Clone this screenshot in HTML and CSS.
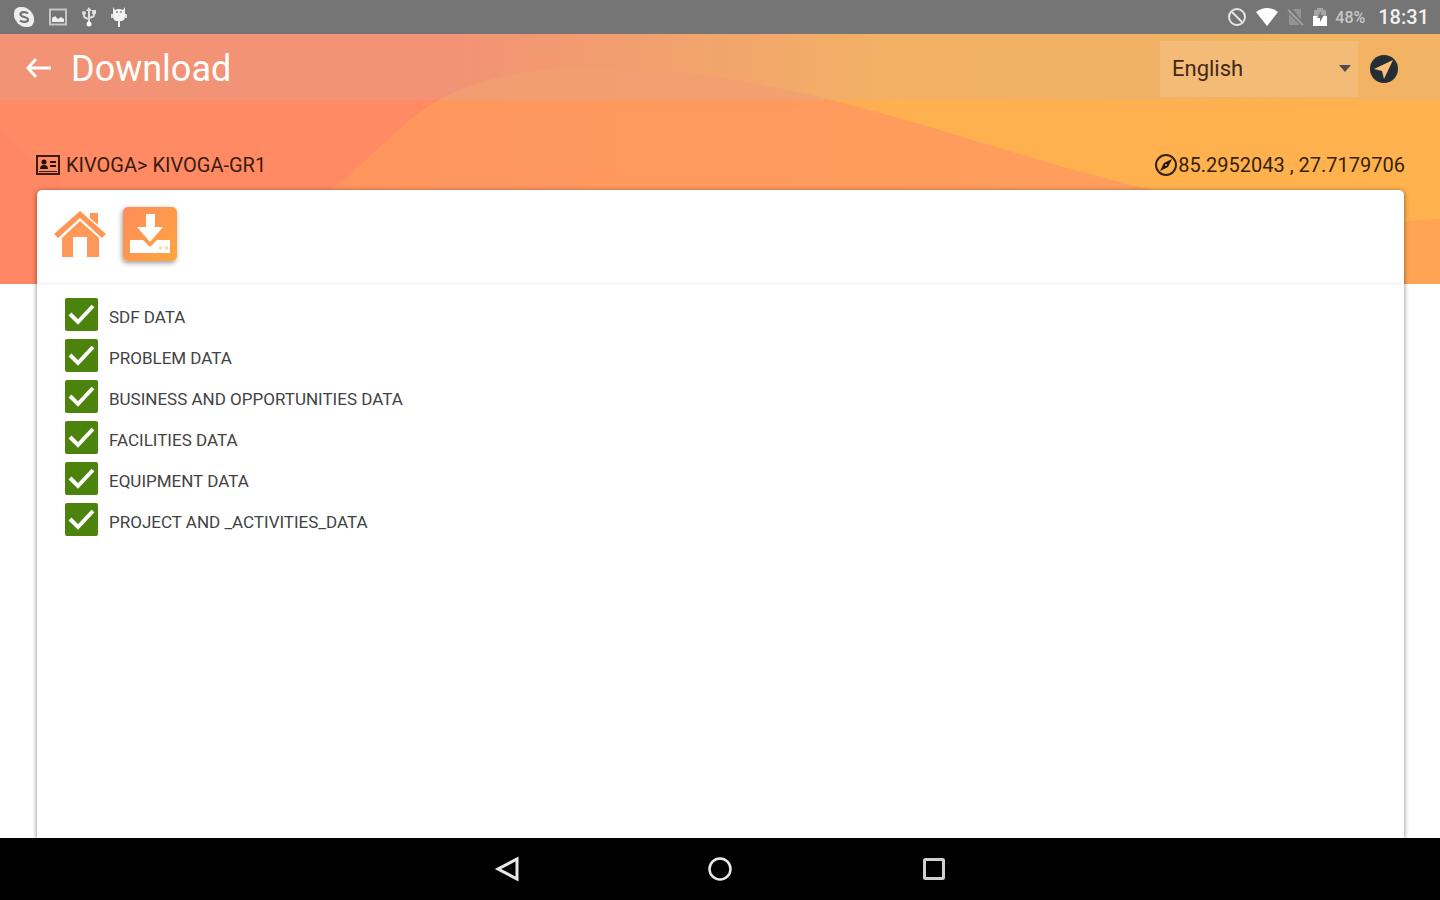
FILE: index.html
```html
<!DOCTYPE html>
<html lang="en">

<head>
    <meta charset="UTF-8">
    <meta name="viewport" content="width=device-width, initial-scale=1.0">
    <title>Download</title>
    <link rel="stylesheet" href="styles.css">
</head>

<body>
    <div class="status-bar">
        <div class="status-group notifications">
            <svg width="22" height="22" viewBox="0 0 22 22">
                <rect x="1" y="1" width="15" height="15" rx="6" fill="#eee" />
                <rect x="6" y="6" width="15" height="15" rx="6" fill="#eee" />
                <circle cx="11" cy="11" r="9" fill="#eee" />
                <path d="M15 7.500C13 5.500 7.500 5.500 7.500 8.500C7.500 11.500 15 10.500 15 13.500C15 16.500 9 16.500 7 14.500" fill="none" stroke="#757575" stroke-width="2.200" />
            </svg>
            <svg width="18" height="18" viewBox="0 0 18 18">
                <rect x="1" y="1.500" width="16" height="15" fill="none" stroke="#c4c4c4" stroke-width="2" />
                <path d="M3 14V10L6 8L9 11L12 9L15 11V14Z" fill="#eee" />
            </svg>
            <svg width="16" height="20" viewBox="0 0 16 20">
                <path d="M8 3V16M3 6V9Q3 11 8 12M13 5V8Q13 10 8 11" fill="none" stroke="#ddd" stroke-width="2" />
                <path d="M5 4L8 0L11 4Z" fill="#ddd" />
                <circle cx="8" cy="17" r="2.500" fill="#fff" />
                <circle cx="3" cy="6" r="2" fill="#ddd" />
                <rect x="11" y="3" width="4" height="4" fill="#ddd" />
            </svg>
            <svg width="16" height="22" viewBox="0 0 16 22">
                <path d="M2 1L4 4Q8 2 12 4L14 1L14 5V10Q14 15 10 15H9V21H7V15H6Q2 15 2 10V5Z" fill="#f2f2f2" />
                <path d="M1 8V12M15 8V12" stroke="#ddd" stroke-width="2" />
                <circle cx="6" cy="6" r="1" fill="#888" />
                <circle cx="10" cy="6" r="1" fill="#888" />
            </svg>
        </div>
        <div class="status-group system">
            <svg width="20" height="20" viewBox="0 0 20 20">
                <circle cx="10" cy="10" r="8" fill="none" stroke="#e6e6e6" stroke-width="2" />
                <path d="M5 5L15 15" stroke="#e6e6e6" stroke-width="2" />
            </svg>
            <svg width="24" height="18" viewBox="0 0 24 18">
                <path d="M12 18L1 4Q12 -4 23 4Z" fill="#fff" />
            </svg>
            <svg width="18" height="20" viewBox="0 0 18 20">
                <path d="M6 2H14V13ZM2 7L13 18H2Z" fill="#939393" />
                <path d="M1 3L16 18" stroke="#a0a0a0" stroke-width="2" />
            </svg>
            <svg width="14" height="20" viewBox="0 0 14 20">
                <path d="M4 1H10V3H13V10H1V3H4Z" fill="#a5a5a5" />
                <path d="M0 9H14V19H0Z" fill="#fff" />
                <path d="M8 4L4 11H7V15L11 8H8Z" fill="#777" />
            </svg>
            <span class="battery">48%</span>
            <span class="clock">18:31</span>
        </div>
    </div>

    <main class="screen">
        <svg class="waves" viewBox="0 0 1440 250" preserveAspectRatio="none" aria-hidden="true">
            <defs>
                <linearGradient id="sky" x1="0" x2="1" y1="0" y2="0">
                    <stop offset="0" stop-color="#ff8a63" />
                    <stop offset="0.320" stop-color="#ff8a63" />
                    <stop offset="0.620" stop-color="#ffb04f" />
                    <stop offset="1" stop-color="#ffb24e" />
                </linearGradient>
                <linearGradient id="hill" x1="0" x2="1" y1="0" y2="0">
                    <stop offset="0" stop-color="#ff955e" />
                    <stop offset="1" stop-color="#ff9f5d" />
                </linearGradient>
            </defs>
            <rect width="1440" height="250" fill="url(#sky)" />
            <path d="M0 96Q25 128 60 144V250H0Z" fill="#ff8763" />
            <path d="M310 170C350 145 375 115 410 86C455 48 515 34 595 34C690 34 770 50 850 71C960 99 1050 134 1180 162V250H310Z" fill="url(#hill)" />
            <path d="M1340 190Q1400 188 1440 185V250H1340Z" fill="#ffa454" />
        </svg>

        <header class="toolbar">
            <button type="button" class="icon-button back" aria-label="Back">
                <svg width="26" height="22" viewBox="0 0 26 22">
                    <path d="M25 10H2M10 1L2 10L10 19" fill="none" stroke="#fff" stroke-width="3" />
                </svg>
            </button>
            <h1>Download</h1>
            <select class="language" aria-label="Language">
                <option>English</option>
            </select>
            <button type="button" class="icon-button" aria-label="My location">
                <svg width="28" height="28" viewBox="0 0 28 28">
                    <circle cx="14" cy="14" r="14" fill="#252d35" />
                    <path d="M23 5L4 14L12 16L14 24Z" fill="#fbc078" />
                </svg>
            </button>
        </header>

        <div class="info-row">
            <div class="group-name">
                <svg width="24" height="20" viewBox="0 0 24 20">
                    <rect x="1" y="1" width="22" height="18" fill="none" stroke="#3b1c12" stroke-width="2" />
                    <circle cx="8" cy="7" r="2.500" fill="#24100a" />
                    <path d="M4 14Q4 10 8 10Q12 10 12 14ZM14 6H20V8H14ZM14 10H20V12H14Z" fill="#24100a" />
                    <path d="M3 16.500H21" stroke="#3b1c12" />
                </svg>
                <span>KIVOGA&gt; KIVOGA-GR1</span>
            </div>
            <div class="coordinates">
                <svg width="24" height="24" viewBox="0 0 24 24">
                    <circle cx="12" cy="12" r="10" fill="none" stroke="#35230b" stroke-width="2" />
                    <path d="M18 6L14 14L6 18L10 10Z" fill="#1e1305" />
                    <circle cx="12" cy="12" r="1" fill="#ffb24e" />
                </svg>
                <span>85.2952043 , 27.7179706</span>
            </div>
        </div>

        <section class="card">
            <nav class="tabs">
                <a href="#home" class="tab" aria-label="Home">
                    <svg width="52" height="48" viewBox="0 0 52 48">
                        <path d="M36 3H44V15L36 8Z" fill="#ff9655" />
                        <path d="M26 1L52 24L48 28L26 8L4 28L0 24Z" fill="#ff9655" />
                        <path d="M26 11L45 28V47H33V27H19V47H8V28Z" fill="#ff9858" />
                    </svg>
                </a>
                <a href="#download" class="tab active" aria-label="Download">
                    <svg width="42" height="42" viewBox="0 0 42 42">
                        <path d="M1 27H14L21 34L28 27H41V40H1Z" fill="#fff" />
                        <path d="M17 1H26V14H34L21 29L8 14H17Z" fill="#fff" />
                        <path d="M30 35H33M36 35H39" stroke="#ffd5a8" stroke-width="3" />
                    </svg>
                </a>
            </nav>
            <form class="data-list">
                <label class="data-item"><input type="checkbox" name="sdf" checked><span>SDF DATA</span></label>
                <label class="data-item"><input type="checkbox" name="problem" checked><span>PROBLEM DATA</span></label>
                <label class="data-item"><input type="checkbox" name="business" checked><span>BUSINESS AND OPPORTUNITIES DATA</span></label>
                <label class="data-item"><input type="checkbox" name="facilities" checked><span>FACILITIES DATA</span></label>
                <label class="data-item"><input type="checkbox" name="equipment" checked><span>EQUIPMENT DATA</span></label>
                <label class="data-item"><input type="checkbox" name="project" checked><span>PROJECT AND _ACTIVITIES_DATA</span></label>
            </form>
        </section>
    </main>

    <footer class="nav-bar">
        <button type="button" class="icon-button" aria-label="Back">
            <svg width="26" height="26" viewBox="0 0 26 26">
                <path d="M24 3V23L5 13Z" fill="none" stroke="#e8e8e8" stroke-width="3" />
            </svg>
        </button>
        <button type="button" class="icon-button" aria-label="Home">
            <svg width="26" height="26" viewBox="0 0 26 26">
                <circle cx="13" cy="13" r="10.500" fill="none" stroke="#e8e8e8" stroke-width="2.500" />
            </svg>
        </button>
        <button type="button" class="icon-button" aria-label="Recent apps">
            <svg width="26" height="26" viewBox="0 0 26 26">
                <rect x="3.500" y="3.500" width="19" height="19" rx="1" fill="none" stroke="#d0d0d0" stroke-width="3" />
            </svg>
        </button>
    </footer>
</body>

</html>
```
FILE: styles.css
```css
* {
    box-sizing: border-box;
}

body {
    margin: 0;
    min-height: 100vh;
    display: flex;
    flex-direction: column;
    font-family: Roboto, "Liberation Sans", sans-serif;
    background-color: #fff;
}

svg {
    display: block;
    flex: none;
}

.icon-button {
    padding: 0;
    border: none;
    background: none;
    cursor: pointer;
}

.status-bar {
    display: flex;
    justify-content: space-between;
    align-items: center;
    height: 34px;
    padding: 0 11px 0 13px;
    background-color: #757575;
    color: #fff;
}

.status-group {
    display: flex;
    align-items: center;
}

.notifications {
    gap: 14px;
}

.system {
    gap: 8px;
}

.battery {
    font-size: 16px;
    font-weight: 500;
    color: #c8c8c8;
}

.clock {
    margin-left: 5px;
    font-size: 20px;
    font-weight: 500;
    color: #f0f0f0;
}

.screen {
    position: relative;
    flex: 1;
    display: flex;
    flex-direction: column;
    overflow: hidden;
}

/* sits behind the toolbar and the top of the card */
.waves {
    position: absolute;
    top: 0;
    left: 0;
    z-index: -1;
    width: 100%;
    height: 250px;
}

.toolbar {
    display: flex;
    align-items: center;
    height: 66px;
    padding: 3px 42px 0 26px;
    background-color: rgba(190, 184, 192, 0.2);
}

.toolbar h1 {
    flex: 1;
    margin: 0 0 0 19px;
    font-size: 36px;
    font-weight: 400;
    line-height: 42px;
    color: #fff;
}

.language {
    appearance: none;
    width: 198px;
    height: 56px;
    margin-right: 12px;
    padding: 0 12px;
    border: none;
    background: url("data:image/svg+xml,%3Csvg xmlns='http://www.w3.org/2000/svg' viewBox='0 0 12 7'%3E%3Cpath d='M0 0h12L6 7z' fill='%23574b50'/%3E%3C/svg%3E") no-repeat right 7px center / 12px 7px rgba(255, 255, 255, 0.12);
    font-family: inherit;
    font-size: 22px;
    color: #40291a;
}

.info-row {
    display: flex;
    justify-content: space-between;
    align-items: center;
    height: 48px;
    margin: 42px 35px 0 36px;
    padding-bottom: 2px;
    font-size: 20px;
    line-height: 24px;
}

.group-name,
.coordinates {
    display: flex;
    align-items: center;
}

.group-name {
    gap: 6px;
    color: #3b1c12;
}

.coordinates {
    color: #35230b;
}

.card {
    flex: 1;
    margin: 0 36px 0 37px;
    border-radius: 5px 5px 0 0;
    background-color: #fff;
    box-shadow: 0 1px 5px rgba(0, 0, 0, 0.5);
}

.tabs {
    display: flex;
    align-items: center;
    gap: 17px;
    height: 95px;
    padding: 0 17px 4px;
    border-bottom: 3px solid #f8f8f8;
}

.tab.active {
    padding: 6px;
    border-radius: 5px;
    background: linear-gradient(135deg, #ff8c5c, #ffa53f);
    box-shadow: -1px 2px 5px rgba(0, 0, 0, 0.4);
}

.data-list {
    display: flex;
    flex-direction: column;
    align-items: flex-start;
    gap: 8px;
    padding: 13px 28px;
}

.data-item {
    display: flex;
    align-items: center;
    gap: 11px;
    font-size: 17px;
    line-height: 22px;
    color: #424242;
}

.data-item span {
    padding-top: 5px;
}

.data-item input {
    appearance: none;
    width: 33px;
    height: 33px;
    margin: 0;
    border-radius: 2px;
    background-color: #fff;
    border: 2px solid #4b830d;
}

.data-item input:checked {
    border: none;
    background: url("data:image/svg+xml,%3Csvg xmlns='http://www.w3.org/2000/svg' viewBox='0 0 33 33'%3E%3Cpath d='M5 16l8 8L28 8' fill='none' stroke='%23fff' stroke-width='4'/%3E%3C/svg%3E") #4b830d;
}

.nav-bar {
    z-index: 1;
    display: flex;
    justify-content: center;
    align-items: center;
    gap: 188px;
    height: 62px;
    background-color: #000;
}
```
